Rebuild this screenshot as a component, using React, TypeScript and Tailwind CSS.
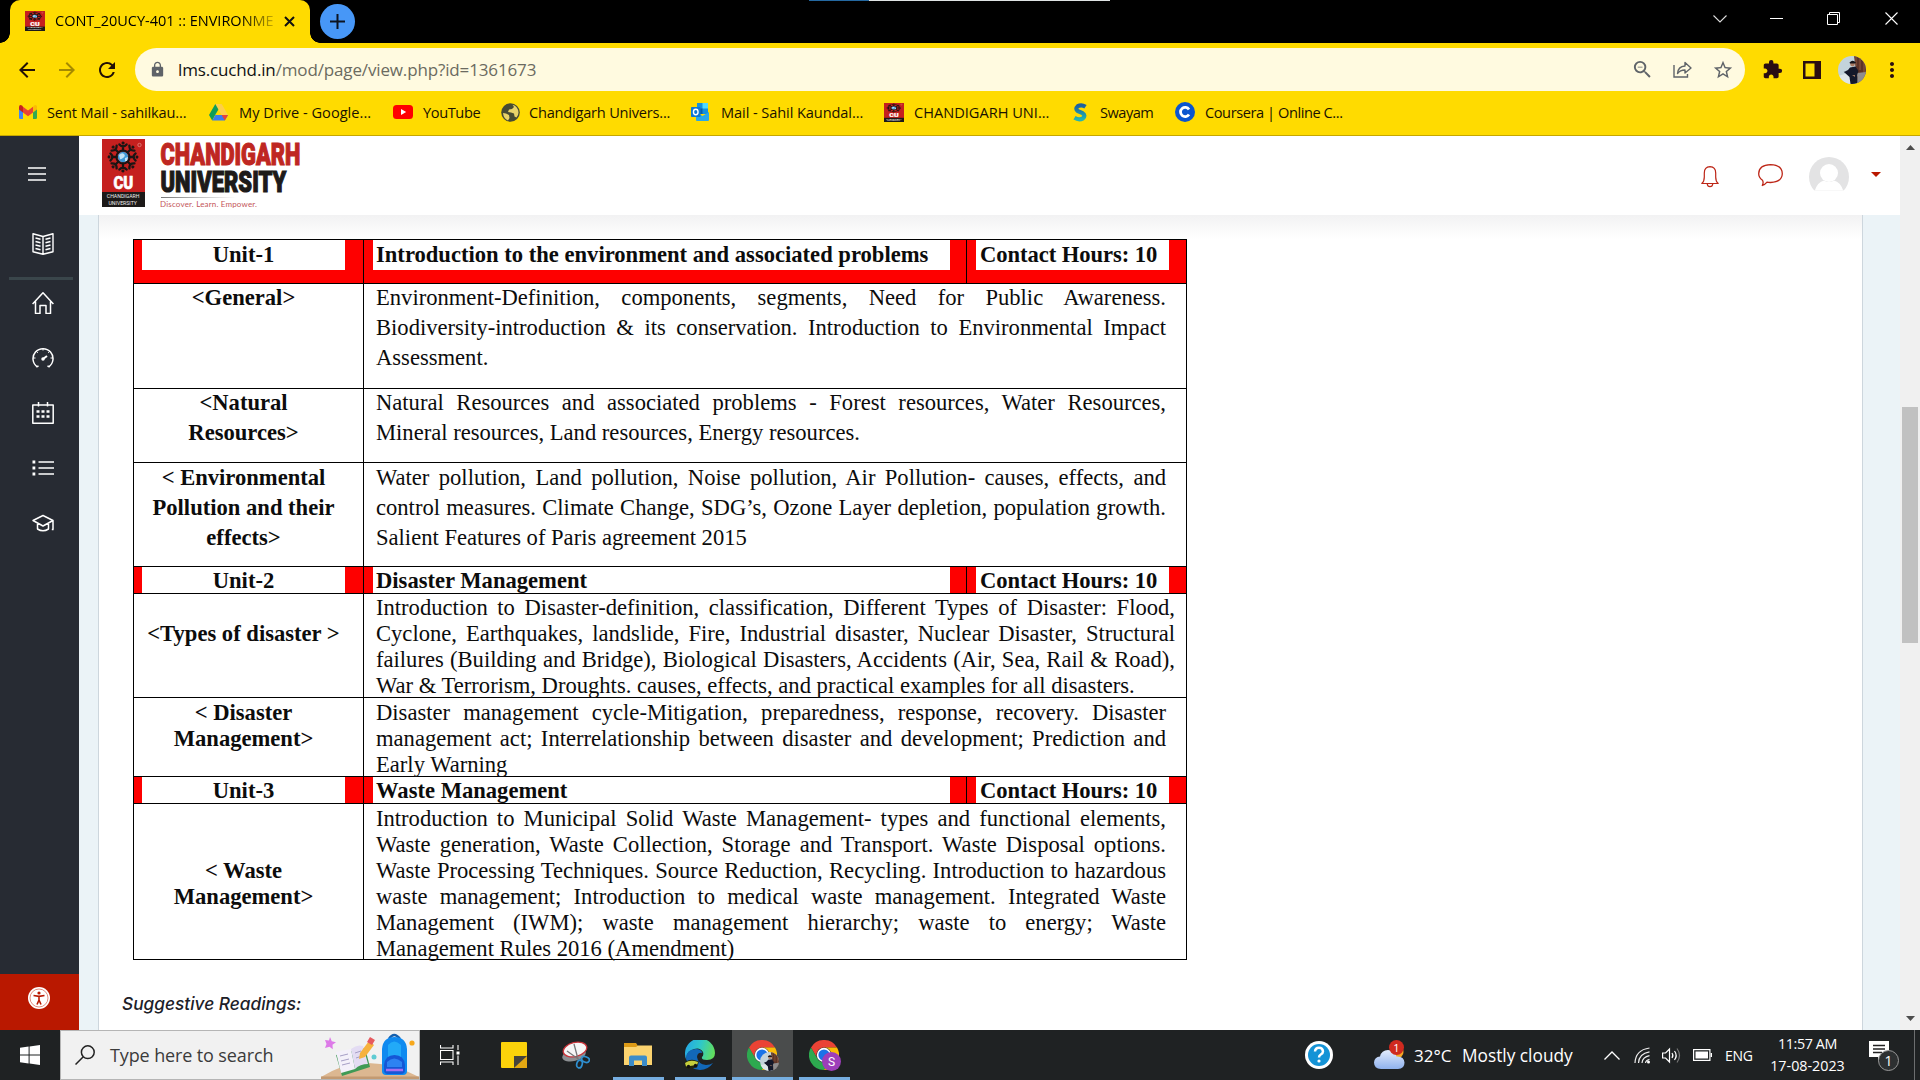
import React from "react";
import { MdArrowBack, MdArrowForward, MdRefresh, MdLock, MdZoomOut, MdStarOutline, MdExtension, MdMoreVert, MdPublic } from "react-icons/md";

/* ---------- logos and icons ---------- */

function CUBadge({ className }: { className: string }) {
  const spokes = [0, 45, 90, 135, 180, 225, 270, 315];
  return (
    <svg className={className} viewBox="0 0 43 68" preserveAspectRatio="none">
      <rect width="43" height="68" fill="#c5201f" />
      <rect y="53" width="43" height="15" fill="#1c1918" />
      <g stroke="#1b1514" fill="none" strokeLinecap="round">
        {spokes.map((a) => (
          <g key={a} transform={`rotate(${a} 21 18)`}>
            <path d="M21 12V7M17.4 5.4q3.6 4 7.200 0" strokeWidth="2.3" />
            <circle cx="21" cy="4" r="1.200" fill="#1b1514" strokeWidth="0.6" />
          </g>
        ))}
        <circle cx="21" cy="18" r="6.600" strokeWidth="2" />
      </g>
      <circle cx="21" cy="18" r="5.2" fill="#3f9ad6" />
      <path d="M17 16q3-3 5-1t-1 4-3 1zM23 19l3-1-1 4-2 0z" fill="#bfe3f5" />
      <circle cx="37.5" cy="6" r="1.7" fill="none" stroke="#e8a9a4" strokeWidth="0.6" />
      <text transform="translate(11.4 49.500) scale(0.84 1)" fontFamily="Roboto" fontWeight="900" fontSize="18" fill="#fff" stroke="#fff" strokeWidth="0.5">CU</text>
      <text transform="translate(4.800 59.300) scale(0.86 1)" fontFamily="Roboto" fontSize="6" fill="#eee">CHANDIGARH</text>
      <text transform="translate(6.500 65.500) scale(0.86 1)" fontFamily="Roboto" fontSize="6" fill="#eee">UNIVERSITY</text>
    </svg>
  );
}

function Wordmark() {
  return (
    <svg className="h-[76px] w-[150px] overflow-visible" viewBox="0 -4 150 76">
      <defs>
        <linearGradient id="rule" x1="0" x2="1">
          <stop offset="0" stopColor="#777" />
          <stop offset="1" stopColor="#777" stopOpacity="0" />
        </linearGradient>
      </defs>
      <text transform="translate(0.500 25.300) scale(0.703 1)" fontFamily="Roboto" fontWeight="900" fontSize="31" fill="#bf2722" stroke="#bf2722" strokeWidth="1.200">CHANDIGARH</text>
      <text transform="translate(0.500 52.300) scale(0.733 1)" fontFamily="Roboto" fontWeight="900" fontSize="30" fill="#1d1a19" stroke="#1d1a19" strokeWidth="1.200">UNIVERSITY</text>
      <rect x="1" y="57" width="75" height="1" fill="url(#rule)" />
      <text x="0" y="66.5" textLength="97" fontFamily="Lato" fontSize="8" fill="#c4565a">Discover. Learn. Empower.</text>
    </svg>
  );
}

function ChromeLogo({ className }: { className: string }) {
  return (
    <svg className={className} viewBox="0 0 48 48">
      <path d="M24 12h20.8A24 24 0 0 0 3.2 12l10.4 18A12 12 0 0 1 24 12z" fill="#ea4335" />
      <path d="M34.4 30 24 48A24 24 0 0 1 3.2 12l10.4 18A12 12 0 0 0 34.4 30z" fill="#2da94f" />
      <path d="M34.4 30 24 48a24 24 0 0 0 20.8-36H24a12 12 0 0 1 10.4 18z" fill="#fbbc05" />
      <circle cx="24" cy="24" r="11.5" fill="#fff" />
      <circle cx="24" cy="24" r="9" fill="#1a73e8" />
    </svg>
  );
}

function ProfilePhoto({ className }: { className: string }) {
  return (
    <svg className={className} viewBox="0 0 28 28">
      <defs>
        <clipPath id="round"><circle cx="14" cy="14" r="14" /></clipPath>
      </defs>
      <g clipPath="url(#round)">
        <rect width="28" height="28" fill="#c3d3da" />
        <path d="M16 0h12v28h-8z" fill="#5c3327" />
        <path d="M18 0v10M22 0v14M26 4v14" stroke="#8d5a41" strokeWidth="1" />
        <path d="M0 20l10-3 8 11H0z" fill="#dfe6e8" />
        <path d="M19 17l9-1v12h-8z" fill="#8f8d8f" />
        <circle cx="14.5" cy="8" r="2.4" fill="#a87c65" />
        <path d="M11.500 6.500q3-3.500 6.500 0l-1 1h-5z" fill="#14151b" />
        <path d="M12 11.500l5.500-1 3 4.500-1.500 4 .500 9h-7l-1-7-5.500-5 4-2z" fill="#14182a" />
        <path d="M5.500 15.500l7 2.500-1 1.500z" fill="#14182a" />
        <path d="M14 19l3 0 0 2z" fill="#9c7562" />
      </g>
    </svg>
  );
}

const markIcons = {
  gmail: (
    <svg className="h-[14px] w-[18px]" viewBox="0 0 18 14">
      <path d="M0 1.5v11.2Q0 14 1.3 14H4V5.6z" fill="#4285f4" />
      <path d="M18 1.5v11.2q0 1.3-1.3 1.3H14V5.6z" fill="#34a853" />
      <path d="M4 7.5V1.8L9 5.6l5-3.8v5.7l-5 3.8z" fill="#ea4335" />
      <path d="M0 2Q.3-1 3 .6L4 1.6v6L0 4.6z" fill="#c5221f" />
      <path d="M18 2q-.3-3-3-1.4L14 1.6v6l4-3z" fill="#fbbc04" />
    </svg>
  ),
  drive: (
    <svg className="h-[17px] w-[19px]" viewBox="0 0 19 17">
      <path d="M6.3 0h6.4L6 11.3 3.2 16.4 0 11z" fill="#0f9d58" />
      <path d="M6.3 0h6.4L19 11h-6.4z" fill="#ffcf48" />
      <path d="M3.2 16.4 6.4 11H19l-3.2 5.4z" fill="#3b7ded" />
      <path d="M12.6 11H19l-3.2 5.4z" fill="#ea4335" />
    </svg>
  ),
  youtube: (
    <svg className="h-[14px] w-5" viewBox="0 0 20 14">
      <rect width="20" height="14" rx="3.5" fill="#f00" />
      <path d="M8 4v6l5.2-3z" fill="#fff" />
    </svg>
  ),
  globe: (
    <svg className="size-[19px]" viewBox="0 0 19 19">
      <circle cx="9.5" cy="9.5" r="9.3" fill="#474b33" />
      <path d="M2 10l3 .5 3 1.500.5 3-1.500 2.500Q2.500 15.500 2 10zM11.500 1.800 13 4l-2 2-3 .5L7 9l3 .5 3 1 .5 3 2 1q2-2.500 2-5-.500-6-6-7.700z" fill="#e9d36a" />
    </svg>
  ),
  outlook: (
    <svg className="h-[18px] w-[18px]" viewBox="0 0 18 18">
      <rect x="6" y="0" width="11" height="11" fill="#1490df" />
      <rect x="11.5" y="0" width="5.5" height="5.5" fill="#50d9ff" />
      <rect x="6" y="5.5" width="5.5" height="5.5" fill="#0a5ea8" />
      <path d="M5 9l6.5 4L18 9v8q0 1-1 1H6q-1 0-1-1z" fill="#28a8ea" />
      <rect y="4" width="9.5" height="10" rx="0.8" fill="#0f78d4" />
      <ellipse cx="4.75" cy="9" rx="2.3" ry="2.7" fill="none" stroke="#fff" strokeWidth="1.4" />
    </svg>
  ),
  cu: <CUBadge className="h-[19px] w-5" />,
  swayam: (
    <svg className="h-[19px] w-[15px]" viewBox="0 0 15 19">
      <defs>
        <linearGradient id="sway" x1="0" y1="0" x2="0" y2="1">
          <stop offset="0" stopColor="#1c5f9e" />
          <stop offset="1" stopColor="#22b5b0" />
        </linearGradient>
      </defs>
      <path d="M12.500 3.800Q8.500 1.200 4.800 3.200 1.800 6 5 8.200L9.500 10.200Q13 12.500 10 15.300 6 17.500 1.500 14.800" fill="none" stroke="url(#sway)" strokeWidth="4.200" />
    </svg>
  ),
  coursera: (
    <svg className="size-5" viewBox="0 0 20 20">
      <circle cx="10" cy="10" r="10" fill="#0b55cf" />
      <path d="M14 7.500A4.600 4.600 0 1 0 14 12.500" fill="none" stroke="#fff" strokeWidth="2.800" />
    </svg>
  ),
};

const bookmarks: { icon: keyof typeof markIcons; label: string; item: string; slot: string; text: string }[] = [
  { icon: "gmail", label: "Sent Mail - sahilkau...", item: "w-[190px]", slot: "w-[28px]", text: "tracking-[-0.14px]" },
  { icon: "drive", label: "My Drive - Google...", item: "w-[184px]", slot: "w-[30px]", text: "tracking-[0.02px]" },
  { icon: "youtube", label: "YouTube", item: "w-[108px]", slot: "w-[30px]", text: "tracking-[-0.4px]" },
  { icon: "globe", label: "Chandigarh Univers...", item: "w-[190px]", slot: "w-[28px]", text: "tracking-[-0.22px]" },
  { icon: "outlook", label: "Mail - Sahil Kaundal...", item: "w-[193px]", slot: "w-[30px]", text: "tracking-[-0.09px]" },
  { icon: "cu", label: "CHANDIGARH UNI...", item: "w-[189px]", slot: "w-[30px]", text: "tracking-[0px]" },
  { icon: "swayam", label: "Swayam", item: "w-[102px]", slot: "w-[27px]", text: "tracking-[-0.5px]" },
  { icon: "coursera", label: "Coursera | Online C...", item: "w-[180px]", slot: "w-[30px]", text: "tracking-[-0.43px]" },
];

/* ---------- browser frame ---------- */

function TabStrip() {
  return (
    <div className="flex h-[43px] w-full bg-black">
      <div className="flex w-[10px] items-end">
        <div className="h-[10px] w-[10px] bg-[radial-gradient(circle_at_0_0,#000_9.5px,#ffdb00_10px)]" />
      </div>
      <div className="flex w-[300px] items-center rounded-t-[10px] bg-[#ffdb00] pb-px pl-[15px]">
        <CUBadge className="h-5 w-5" />
        <div className="ml-[10px] w-[219px] overflow-hidden bg-gradient-to-r from-black from-85% to-black/20 bg-clip-text text-[14.5px] whitespace-nowrap text-transparent">
          CONT_20UCY-401 :: ENVIRONME
        </div>
        <svg className="ml-[10px] size-[11px]" viewBox="0 0 11 11" stroke="#111" strokeWidth="2"><path d="M1 1l9 9M10 1l-9 9" /></svg>
      </div>
      <div className="flex w-[10px] items-end">
        <div className="h-[10px] w-[10px] bg-[radial-gradient(circle_at_100%_0,#000_9.5px,#ffdb00_10px)]" />
      </div>
      <div className="mt-1 flex size-[35px] items-center justify-center rounded-full bg-[#4797f7]">
        <svg className="size-[15px]" viewBox="0 0 15 15" stroke="#0c1422" strokeWidth="2"><path d="M7.5 0v15M0 7.5h15" /></svg>
      </div>
      <div className="ml-[454px] h-px w-[60px] bg-[#2468a0]" />
      <div className="h-px w-[241px] bg-[#dfe3e4]" />
      <div className="ml-auto flex h-[37px] items-center pr-[22px]">
        <svg className="h-2 w-[14px]" viewBox="0 0 14 8" fill="none" stroke="#ddd" strokeWidth="1.1"><path d="M.5.5 7 7 13.500.500" /></svg>
        <div className="ml-[43px] h-px w-[13px] bg-white" />
        <svg className="ml-[44px] size-[13px]" viewBox="0 0 13 13" fill="none" stroke="#fff"><path d="M.500 2.500h10v10h-10zM2.500 2.500v-2h10v10h-2" /></svg>
        <svg className="ml-[45px] size-[13px]" viewBox="0 0 13 13" stroke="#fff" strokeWidth="1.100"><path d="M.500.500l12 12M12.500.500l-12 12" /></svg>
      </div>
    </div>
  );
}

function AddressBar() {
  return (
    <div className="flex h-[53px] items-center text-[#2a0d12]">
      <MdArrowBack className="ml-[15px] size-6 text-[#221006]" />
      <MdArrowForward className="ml-4 size-6 text-[#a58a00]" />
      <MdRefresh className="ml-4 size-6 text-[#221006]" />
      <div className="ml-[16px] flex h-[43px] w-[1610px] items-center rounded-full bg-[#fffae0] text-[#5f6368]">
        <MdLock className="ml-[14px] size-[17px]" />
        <div className="ml-[12px] text-[17px] tracking-[-0.14px] whitespace-nowrap text-[#6b6a60]">
          <span className="text-[#111]">lms.cuchd.in</span>/mod/page/view.php?id=1361673
        </div>
        <MdZoomOut className="ml-auto size-[23px]" />
        <svg className="ml-[19px] h-[17px] w-[19px]" viewBox="0 0 19 17" fill="none" stroke="currentColor" strokeWidth="1.400">
          <path d="M1 4v12h13.500v-3" />
          <path d="M4.500 12.500Q5 5.500 12 5V1.500L18 7l-6 5V9Q7 9 4.500 12.500z" strokeLinejoin="round" />
        </svg>
        <MdStarOutline className="mr-[11px] ml-[20px] size-[22px]" />
      </div>
      <MdExtension className="ml-[17px] size-[21px]" />
      <svg className="ml-[20px] size-[18px]" viewBox="0 0 18 18" fill="#2a0d12"><path d="M0 0h18v18H0zM2.500 2.500v13h9v-13z" fillRule="evenodd" /></svg>
      <ProfilePhoto className="ml-[17px] size-7" />
      <MdMoreVert className="ml-[14px] size-6" />
    </div>
  );
}

function Bookmarks() {
  return (
    <div className="flex h-[40px] items-center border-b border-[#c6a700] pb-[6px] pl-[19px] text-[14.6px] text-[#1a1200]">
      {bookmarks.map((b) => (
        <div key={b.label} className={`flex shrink-0 items-center ${b.item}`}>
          <div className={`flex shrink-0 items-center ${b.slot}`}>{markIcons[b.icon]}</div>
          <span className={`whitespace-nowrap ${b.text}`}>{b.label}</span>
        </div>
      ))}
    </div>
  );
}

/* ---------- page ---------- */

function SideIcon({ children }: { children: React.ReactNode }) {
  return (
    <div className="flex h-[55px] items-center justify-center pl-[6px]">
      <svg className="size-[22px]" viewBox="0 0 22 22" fill="none" stroke="#fff" strokeWidth="1.5" strokeLinejoin="round">{children}</svg>
    </div>
  );
}

function Sidebar() {
  return (
    <aside className="flex w-[79px] shrink-0 flex-col bg-[#272b33]">
      <div className="flex h-[75px] items-center pl-[28px]">
        <svg className="h-[14px] w-[18px]" viewBox="0 0 18 14" stroke="#fff" strokeWidth="1.400"><path d="M0 1h18M0 7h18M0 13h18" /></svg>
      </div>
      <div className="flex h-[66px] items-center justify-center pl-[6px]">
        <svg className="size-[22px]" viewBox="0 0 22 22" fill="none" stroke="#fff" strokeWidth="1.400" strokeLinejoin="round">
          <path d="M11 3.500 1 .800v18L11 21.300l10-2.500V.800zM11 3.500v17.800" />
          <path d="M3.500 5l5 1.300M3.500 8.500l5 1.300M3.500 12l5 1.300M3.500 15.500l5 1.300M18.500 5l-5 1.300M18.500 8.500l-5 1.300M18.500 12l-5 1.300M18.500 15.500l-5 1.300" />
        </svg>
      </div>
      <div className="ml-[9px] h-[3px] w-[64px] bg-[#3a464b]" />
      <div className="-mt-[5px]">
        <SideIcon><path d="M.600 12 11 .800 21.400 12M3.500 9.500v12H8V13.500h6v8h4.500v-12" /></SideIcon>
        <SideIcon>
          <path d="M5.500 20A10 10 0 1 1 16.500 20" />
          <path d="M1 11h2.500M18.500 11H21M4 4l1.800 1.800M11 1v2.500M18 4l-1.800 1.800" strokeWidth="1" />
          <path d="M11 12l4-3" strokeWidth="2" />
          <circle cx="11" cy="12" r="1" fill="#fff" />
          <path d="M4.300 19.500l2.300-.200M17.700 19.500l-2.300-.200" />
        </SideIcon>
        <SideIcon>
          <path d="M.800 3h20.400v18.200H.800zM6.500 0v4.500M15.500 0v4.500" />
          <path d="M4.500 9.500h3M9.500 9.500h3M14.500 9.500h3M4.500 14.500h3M9.500 14.500h3M14.500 14.500h3" strokeWidth="2.600" />
        </SideIcon>
        <SideIcon><path d="M6.500 5H22M6.500 11H22M6.500 17H22" /><path d="M.500 5h2.800M.500 11h2.800M.500 17h2.800" strokeWidth="2.800" /></SideIcon>
        <SideIcon><path d="M1 8.500 11 3.500l10 5L11 14zM5.500 11v6q5.500 3.500 11 0v-6M21 8.500v9M19.800 17.500h1.800" /></SideIcon>
      </div>
      <div className="mt-auto flex h-[56px] justify-center bg-[#b91800] pt-[13px] pr-px">
        <svg className="size-[22px]" viewBox="0 0 22 22">
          <circle cx="11" cy="11" r="11" fill="#fff" />
          <circle cx="11" cy="11" r="9" fill="none" stroke="#d8705f" strokeWidth="0.800" />
          <circle cx="11" cy="6" r="1.600" fill="#b91800" />
          <path d="M5.500 8.500 11 9.400l5.500-.900M11 9v4l-2 4.500M11 13l2 4.500" stroke="#b91800" strokeWidth="1.600" fill="none" />
        </svg>
      </div>
    </aside>
  );
}

function Header() {
  return (
    <header className="flex h-[79px] shrink-0 bg-white">
      <CUBadge className="mt-[3px] ml-[23px] h-[68px] w-[43px]" />
      <div className="ml-[15px]"><Wordmark /></div>
      <svg className="mt-[30px] ml-auto h-[22px] w-[18px]" viewBox="0 0 18 22" fill="none" stroke="#bd2617" strokeWidth="1.200">
        <path d="M.800 17.500q2.500-2 2.500-6.500V7q0-6 5.700-6.300Q14.700 1 14.700 7v4q0 4.500 2.500 6.500zM6.200 17.700q.300 3 2.800 3t2.800-3" strokeLinejoin="round" />
      </svg>
      <svg className="mt-[28px] ml-[39px] h-[23px] w-[25px]" viewBox="0 0 25 23" fill="none" stroke="#bd2617" strokeWidth="1.300">
        <path d="M4.500 16.200Q.700 13.500.700 9.700.900 1 12.500.700 24.100 1 24.300 9.700 24 18 12.500 18.500q-2 0-3.500-.300-2 2.500-4.700 3.300 1.500-3 .200-5.300z" strokeLinejoin="round" />
      </svg>
      <svg className="mt-[21px] ml-[26px] h-10 w-10" viewBox="0 0 40 40">
        <defs><clipPath id="disc"><path d="M0 0h40v33.500H0z" /></clipPath></defs>
        <g clipPath="url(#disc)">
          <circle cx="20" cy="20" r="20" fill="#e3e3e4" />
          <circle cx="20" cy="16" r="9" fill="#fff" />
          <path d="M5 36q3-11 10-12.500 5 3 10 0Q32 25 35 36z" fill="#fff" />
        </g>
      </svg>
      <svg className="mt-[36px] mr-[19px] ml-[22px] h-[5px] w-[10px]" viewBox="0 0 10 5" fill="#b91800"><path d="M0 0h10L5 5z" /></svg>
    </header>
  );
}

/* Every array entry is one printed line; all but the last are spread to the full measure. */
function Lines({ lines, className }: { lines: string[]; className: string }) {
  return (
    <div className={className}>
      {lines.map((l, i) => (
        <div key={l} className={i < lines.length - 1 ? "whitespace-nowrap [text-align-last:justify]" : "whitespace-nowrap"}>{l}</div>
      ))}
    </div>
  );
}

function UnitRow({ unit, title, row, box }: { unit: string; title: string; row: string; box: string }) {
  return (
    <div className={`flex border-t border-black bg-[#fe0000] font-bold ${row}`}>
      <div className="w-[229px] pl-[8px]"><div className={`w-[203px] bg-white text-center ${box}`}>{unit}</div></div>
      <div className="w-[603px] border-l border-black pl-[9px]"><div className={`w-[577px] bg-white pl-[3px] ${box}`}>{title}</div></div>
      <div className="w-[220px] border-l border-black pl-[9px]"><div className={`w-[193px] bg-white pl-[4px] tracking-[-0.06px] whitespace-nowrap ${box}`}>Contact Hours: 10</div></div>
    </div>
  );
}

function TopicRow({ label, lines, row, left, body }: { label: string[]; lines: string[]; row: string; left: string; body: string }) {
  return (
    <div className={`flex border-t border-black ${row}`}>
      <div className={`w-[229px] pr-[10px] text-center font-bold whitespace-nowrap ${left}`}>
        {label.map((l) => <div key={l}>{l}</div>)}
      </div>
      <div className="w-[823px] border-l border-black pl-[12px]"><Lines lines={lines} className={body} /></div>
    </div>
  );
}

function Syllabus() {
  return (
    <div className="w-[1054px] border-x border-b border-black bg-white font-['Liberation_Serif',serif] text-[22.6px] text-[#0c0c0c]">
      <UnitRow unit="Unit-1" title="Introduction to the environment and associated problems" row="h-[44px]" box="h-[30px] leading-[30px]" />
      <TopicRow label={["<General>"]} row="h-[105px]" left="-mt-px leading-[30px]" body="-mt-px w-[790px] leading-[30px]"
        lines={["Environment-Definition, components, segments, Need for Public Awareness.", "Biodiversity-introduction & its conservation. Introduction to Environmental Impact", "Assessment."]} />
      <TopicRow label={["<Natural", "Resources>"]} row="h-[74px]" left="-mt-px leading-[30px]" body="-mt-px w-[790px] leading-[30px]"
        lines={["Natural Resources and associated problems - Forest resources, Water Resources,", "Mineral resources, Land resources, Energy resources."]} />
      <TopicRow label={["< Environmental", "Pollution and their", "effects>"]} row="h-[104px]" left="leading-[30px]" body="w-[790px] leading-[30px]"
        lines={["Water pollution, Land pollution, Noise pollution, Air Pollution- causes, effects, and", "control measures. Climate Change, SDG’s, Ozone Layer depletion, population growth.", "Salient Features of Paris agreement 2015"]} />
      <UnitRow unit="Unit-2" title="Disaster Management" row="h-[27px]" box="h-[26px] leading-[28px]" />
      <TopicRow label={["<Types of disaster >"]} row="h-[104px]" left="pt-[27px] leading-[26px]" body="pt-px w-[799px] leading-[26px]"
        lines={["Introduction to Disaster-definition, classification, Different Types of Disaster: Flood,", "Cyclone, Earthquakes, landslide, Fire, Industrial disaster, Nuclear Disaster, Structural", "failures (Building and Bridge), Biological Disasters, Accidents (Air, Sea, Rail & Road),", "War & Terrorism, Droughts. causes, effects, and practical examples for all disasters."]} />
      <TopicRow label={["< Disaster", "Management>"]} row="h-[79px]" left="pt-[2px] leading-[26px]" body="pt-[2px] w-[790px] leading-[26px]"
        lines={["Disaster management cycle-Mitigation, preparedness, response, recovery. Disaster", "management act; Interrelationship between disaster and development; Prediction and", "Early Warning"]} />
      <UnitRow unit="Unit-3" title="Waste Management" row="h-[27px]" box="h-[26px] leading-[28px]" />
      <TopicRow label={["< Waste", "Management>"]} row="h-[156px]" left="pt-[54px] leading-[26px]" body="pt-[2px] w-[790px] leading-[25.9px]"
        lines={["Introduction to Municipal Solid Waste Management- types and functional elements,", "Waste generation, Waste Collection, Storage and Transport. Waste Disposal options.", "Waste Processing Techniques. Source Reduction, Recycling. Introduction to hazardous", "waste management; Introduction to medical waste management. Integrated Waste", "Management (IWM); waste management hierarchy; waste to energy; Waste", "Management Rules 2016 (Amendment)"]} />
    </div>
  );
}

function Page() {
  return (
    <div className="flex h-[894px] overflow-hidden bg-white">
      <Sidebar />
      <div className="flex w-[1821px] flex-col">
        <Header />
        <div className="flex grow bg-[#ebf3f7]">
          <main className="ml-[19px] flex w-[1765px] flex-col border-x border-[#cdd6dd] bg-white">
            <div className="h-[24px] bg-gradient-to-b from-[#f2f2f3] to-white" />
            <div className="ml-[34px]"><Syllabus /></div>
            <p className="mt-[30px] ml-[23px] font-['Inter',sans-serif] text-[17.3px] leading-[28px] font-medium text-[#1c2028] italic">Suggestive Readings:</p>
          </main>
        </div>
      </div>
      <div className="flex w-5 flex-col items-center bg-[#f0f0f0]">
        <svg className="mt-[9px] h-[5px] w-[9px]" viewBox="0 0 9 5" fill="#4d4d4d"><path d="M0 5h9L4.500 0z" /></svg>
        <div className="mt-[257px] h-[236px] w-4 bg-[#c1c1c1]" />
        <svg className="mt-auto mb-[9px] h-[5px] w-[9px]" viewBox="0 0 9 5" fill="#4d4d4d"><path d="M0 0h9L4.500 5z" /></svg>
      </div>
    </div>
  );
}

/* ---------- taskbar ---------- */

function SearchArt() {
  return (
    <svg className="ml-auto h-[48px] w-[98px]" viewBox="0 0 98 48">
      <path d="M0 48V46Q45 18 98 46v2z" fill="#dcb791" />
      <path d="M0 45.500h98V48H0z" fill="#c39a72" />
      <path d="M9 6l1.800 4.200 4.200 1-3.500 2.600.300 4.500-3.300-2.600-4.500 1.200 1.500-4L4 9l4 .500z" fill="#dd7ae8" />
      <path d="M15 24l29-7 5 19-28 9z" fill="#3f9a55" />
      <path d="M15 21l15-3 4 20-14 4z" fill="#f4f0fa" />
      <path d="M30 18q6-5 12-3l5 18q-8 0-13 5z" fill="#e3dcf3" />
      <path d="M19 25l8-2M20 30l8-2M21 34l8-2M34 22l6-2M35 27l6-2" stroke="#a79fc6" />
      <path d="M39 22l9-12 5 4-9 12-6 2z" fill="#f6b23d" />
      <path d="M46 11l3-5 5 3-3 5z" fill="#e65a5f" />
      <circle cx="53" cy="26" r="2.500" fill="#5ecbd3" />
      <circle cx="91" cy="12" r="2.600" fill="#f7a81c" />
      <path d="M68 8q5-8 11 0" fill="none" stroke="#145fae" strokeWidth="2.500" />
      <path d="M61 18q1-12 12.500-12T86 18v22q0 4-4 4H65q-4 0-4-4z" fill="#0f8af0" />
      <path d="M67 14q6-7 13 0v12H67z" fill="#22aaf8" />
      <path d="M63 34q1-10 10.500-10T84 34v5q0 4-4 4H67q-4 0-4-4z" fill="#1557d6" />
      <path d="M66 31q7-7 15 0v5H66z" fill="#2d83f2" />
      <path d="M65 39h17" stroke="#a66ff0" strokeWidth="2.500" />
    </svg>
  );
}

function Taskbar() {
  return (
    <footer className="flex h-[50px] items-center bg-[#1f2223] text-white">
      <div className="flex w-[60px] justify-center">
        <svg className="size-5" viewBox="0 0 20 20" fill="#fff"><path d="M0 2.800l8.600-1.200v8H0zM9.600 1.500 20 0v9.600H9.600zM0 10.500h8.600v8L0 17.300zM9.600 10.500H20V20L9.600 18.600z" /></svg>
      </div>
      <div className="flex h-[50px] w-[360px] items-center border border-[#b5b5b5] bg-[#f1f1f1]">
        <svg className="ml-[14px] size-5" viewBox="0 0 20 20" fill="none" stroke="#222" strokeWidth="1.500"><circle cx="12.800" cy="7.200" r="6.400" /><path d="M8.300 11.800.500 19.500" /></svg>
        <span className="ml-[15px] text-[18px] tracking-[-0.12px] whitespace-nowrap text-[#3b3b3b]">Type here to search</span>
        <SearchArt />
      </div>
      <svg className="ml-[20px] size-5" viewBox="0 0 20 20" fill="none" stroke="#fff" strokeWidth="1.100"><path d="M.500 5.500h12.500v9H.500zM.500 0v3h12.500V0M.500 20v-3h12.500V20M18 0v5M18 10.500V20" /><path d="M16.500 6.500h3v3h-3z" fill="#fff" stroke="none" /></svg>
      <svg className="ml-[41px] size-[26px]" viewBox="0 0 26 26"><rect width="26" height="26" rx="1" fill="#fbd20a" /><path d="M13 26h13V13z" fill="#e2a712" /><path d="M13 26V14h13z" fill="#45433b" /></svg>
      <svg className="ml-[35px] size-7" viewBox="0 0 28 28" fill="none">
        <ellipse cx="12" cy="14" rx="12" ry="6" transform="rotate(-14 12 14)" fill="#8c8f92" />
        <ellipse cx="13" cy="8.500" rx="12" ry="7" transform="rotate(-14 13 8.500)" fill="#f6f6f6" stroke="#c8343a" strokeWidth="1.300" />
        <path d="M12 3l4 15M5 10l14 10" stroke="#777" strokeWidth="1.300" />
        <ellipse cx="23.500" cy="18.500" rx="4" ry="2.700" transform="rotate(20 23.500 18.500)" stroke="#2e8fd0" strokeWidth="1.700" />
        <ellipse cx="17.500" cy="23" rx="2.700" ry="4" transform="rotate(15 17.500 23)" stroke="#2e8fd0" strokeWidth="1.700" />
      </svg>
      <div className="ml-[23px] flex h-full w-[51px] flex-col items-center border-b-[3px] border-[#76aee0] pt-[13px] pr-px">
        <svg className="h-[23px] w-7" viewBox="0 0 28 23"><path d="M0 0h12l2 3v5H0z" fill="#dc9a16" /><path d="M0 4h12l2-1.500h14V22H0z" fill="#fbd36f" /><path d="M5 23V14.500q0-2 2-2h14q2 0 2 2V23h-5v-5.500h-8V23z" fill="#3c8cc9" /></svg>
      </div>
      <div className="ml-[11px] flex h-full w-[51px] flex-col items-center border-b-[3px] border-[#76aee0] pt-[10px] pr-px">
        <svg className="size-[30px]" viewBox="0 0 30 30">
          <defs>
            <linearGradient id="edge" x1="0" x2="1" y1="0.300" y2="0.500"><stop offset="0" stopColor="#24a7e6" /><stop offset="0.500" stopColor="#2fc8c8" /><stop offset="1" stopColor="#62de5c" /></linearGradient>
          </defs>
          <path d="M0 14A15 15 0 0 1 30 13q0 7-8 7-6 0-5-3 2-2 1-5-3-5-9-3Q2 11 1 19 0 17 0 14z" fill="url(#edge)" />
          <path d="M1 19Q1 9 11 9q5 0 6.500 4-5-1-5.500 4 1 7 9 8 4 0 7-2-5 7-13 7Q4 29.500 1 19z" fill="#1268b8" />
          <path d="M0 22q5-3 9-2l5 1.500-2 6-9 1.500-3-2z" fill="#22260f" />
          <path d="M0 23q5-4 13-1l-1 3-11 1.500z" fill="#c5cf3d" />
          <circle cx="3.500" cy="26.500" r="1.700" fill="#111" /><circle cx="10.500" cy="25.500" r="1.700" fill="#111" />
        </svg>
      </div>
      <div className="ml-[6px] flex h-full w-[61px] flex-col items-center border-b-[3px] border-[#76aee0] bg-[#4a4c4c] pt-[10px] pr-px">
        <div className="relative h-[30px] w-[30px]">
          <ChromeLogo className="size-[30px]" />
          <ProfilePhoto className="absolute top-[12px] left-[13px] size-[19px]" />
        </div>
      </div>
      <div className="ml-[6px] flex h-full w-[51px] flex-col items-center border-b-[3px] border-[#76aee0] pt-[10px] pr-px">
        <div className="relative h-[30px] w-[30px]">
          <ChromeLogo className="size-[30px]" />
          <div className="absolute top-[12px] left-[13px] flex size-[19px] items-center justify-center rounded-full bg-[#9d3fb9] font-['Roboto',sans-serif] text-[12px] text-white">S</div>
        </div>
      </div>

      <svg className="ml-auto size-7" viewBox="0 0 28 28">
        <circle cx="14" cy="14" r="14" fill="#fff" /><circle cx="14" cy="14" r="11" fill="#1493d6" />
        <path d="M10 10.500q.300-3.800 4-3.800t4 3.600q0 2-2.200 3.200-1.800 1-1.800 3" fill="none" stroke="#fff" strokeWidth="2.500" /><circle cx="14" cy="20" r="1.600" fill="#fff" />
      </svg>
      <div className="relative ml-[41px] h-[30px] w-[31px]">
        <svg className="h-[30px] w-[31px]" viewBox="0 0 31 30">
          <defs><linearGradient id="cloud" x1="0" x2="0" y1="0" y2="1"><stop offset="0" stopColor="#e3ecfd" /><stop offset="1" stopColor="#8fb2ee" /></linearGradient></defs>
          <circle cx="23" cy="12" r="6.500" fill="#f5a623" />
          <path d="M7 29q-7-.500-7-6.500Q.500 17 6 16.500 7.500 10 14 10t8.500 6.500Q30 16 30.500 22.500 30.500 29 24 29z" fill="url(#cloud)" />
        </svg>
        <div className="absolute top-0 left-[15px] flex size-[15px] items-center justify-center rounded-full bg-[#cf2a1f] text-[11px] leading-none">1</div>
      </div>
      <span className="ml-[9px] w-[48px] pt-px text-[17px] whitespace-nowrap">32°C</span>
      <span className="w-[142px] pt-px text-[17.3px] whitespace-nowrap">Mostly cloudy</span>
      <svg className="h-[9px] w-4" viewBox="0 0 16 9" fill="none" stroke="#fff" strokeWidth="1.300"><path d="M.500 8.500 8 1l7.500 7.500" /></svg>
      <svg className="ml-[14px] h-[17px] w-[17px]" viewBox="0 0 17 17" fill="none" stroke="#eee" strokeWidth="1.200">
        <path d="M1 16Q1.500 3 15.500 1M4.500 16Q5 6.500 15.500 4.800M8 16q.500-6 7.500-7.300M11.500 16q.300-2.700 4-3.700" /><circle cx="14.500" cy="15" r="1.500" fill="#fff" stroke="none" />
      </svg>
      <svg className="ml-[11px] h-[17px] w-[20px]" viewBox="0 0 20 17" fill="none" stroke="#fff" strokeWidth="1.200">
        <path d="M.600 6v5h3L7.500 15V2L3.600 6zM10 6q1.800 2.500 0 5M12.500 4q3.400 4.500 0 9" /><path d="M15 1.500q5 7 0 14" stroke="#777" />
      </svg>
      <svg className="ml-[11px] h-[12px] w-[19px]" viewBox="0 0 19 12" fill="none" stroke="#fff"><rect x="0.600" y="0.600" width="16.300" height="10.800" strokeWidth="1.200" /><rect x="2.500" y="2.500" width="12.500" height="7" fill="#fff" stroke="none" /><path d="M18.300 4v4" strokeWidth="1.400" /></svg>
      <span className="ml-[13px] w-[30px] text-[14px] tracking-[-0.3px]">ENG</span>
      <div className="ml-[14px] w-[77px] text-center text-[14.3px] leading-[22px] whitespace-nowrap">
        <div className="tracking-[-0.4px]">11:57 AM</div>
        <div>17-08-2023</div>
      </div>
      <div className="relative mt-[4px] ml-[23px] h-[32px] w-[31px]">
        <svg className="h-[21px] w-5" viewBox="0 0 20 21"><path d="M0 0h20v16h-7l-4 4v-4H0z" fill="#fff" /><path d="M4 4.500h12M4 8h12M4 11.500h9" stroke="#222" strokeWidth="1.300" /></svg>
        <div className="absolute top-[9px] left-[9px] flex size-[21px] items-center justify-center rounded-full border border-[#999] bg-[#2d3031] text-[14px] leading-none">1</div>
      </div>
      <div className="mr-[5px] ml-[14px] h-full w-px bg-[#6c6e6f]" />
    </footer>
  );
}

export default function App() {
  return (
    <div className="h-[1080px] w-[1920px] overflow-hidden bg-[#ffdb00] font-['Open_Sans','Noto_Sans',sans-serif]">
      <TabStrip />
      <AddressBar />
      <Bookmarks />
      <Page />
      <Taskbar />
    </div>
  );
}
